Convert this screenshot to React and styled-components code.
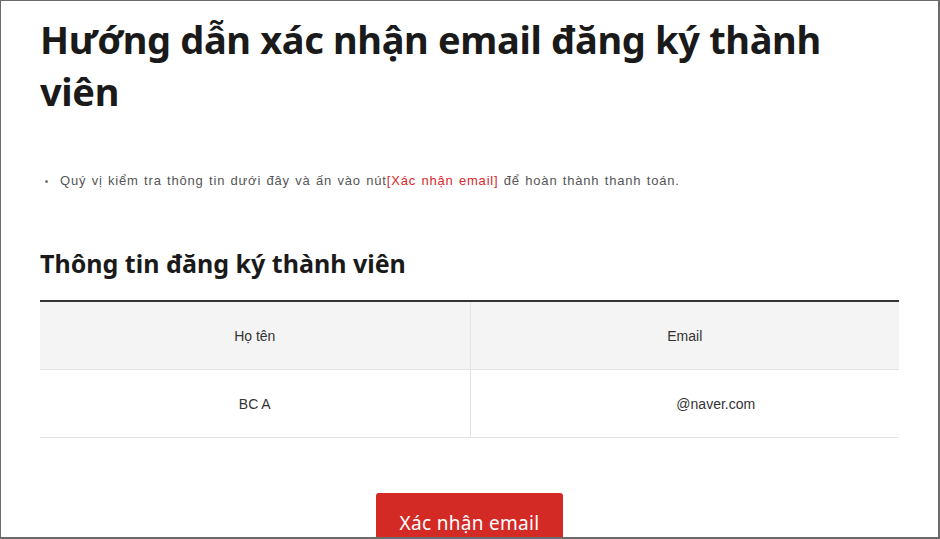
import React from "react";
import styled, { createGlobalStyle } from "styled-components";

const Global = createGlobalStyle`
  html, body { margin: 0; padding: 0; background: #fff; }
  * { box-sizing: border-box; }
`;

const Frame = styled.div`
  width: 940px;
  height: 539px;
  overflow: hidden;
  border-top: 1px solid #6b6b6b;
  border-left: 1px solid #6b6b6b;
  border-right: 2px solid #6b6b6b;
  border-bottom: 2px solid #6b6b6b;
  background: #fff;
`;

const Content = styled.div`
  padding: 12px 39px 0 39px;
  display: flex;
  flex-direction: column;
`;

const Title = styled.h1`
  margin: 0;
  font-family: "Noto Sans", "Open Sans", sans-serif;
  font-weight: 700;
  font-size: 38px;
  line-height: 52px;
  color: #1a1a1a;
  letter-spacing: -0.35px;
`;

const Notes = styled.ul`
  margin: 55px 0 0;
  padding: 0 0 0 20px;
  list-style: none;
`;

const Note = styled.li`
  position: relative;
  font-family: "Liberation Sans", Arial, sans-serif;
  font-size: 13px;
  line-height: 18px;
  letter-spacing: 0.8px;
  word-spacing: 1px;
  color: #555;
  &::before {
    content: "";
    position: absolute;
    left: -15px;
    top: 8px;
    width: 3px;
    height: 3px;
    border-radius: 50%;
    background: #777;
  }
`;

const Highlight = styled.span`
  color: #d8272a;
`;

const SubTitle = styled.h2`
  margin: 57px 0 0;
  font-family: "Noto Sans", "Open Sans", sans-serif;
  font-weight: 700;
  font-size: 25px;
  line-height: 32px;
  color: #1a1a1a;
`;

const Table = styled.div`
  margin-top: 21px;
  border-top: 2px solid #333;
  display: grid;
  grid-template-columns: 1fr 1fr;
`;

const Cell = styled.div`
  height: 68px;
  display: flex;
  align-items: center;
  justify-content: center;
  padding-left: ${(p) => p.$shift || 0}px;
  background: ${(p) => (p.$head ? "#f4f4f4" : "#fff")};
  border-bottom: 1px solid #e3e3e3;
  border-left: ${(p) => (p.$divider ? "1px solid #e3e3e3" : "none")};
  font-family: "Liberation Sans", Arial, sans-serif;
  font-size: 14px;
  color: #333;
`;

const Actions = styled.div`
  display: flex;
  justify-content: center;
  margin-top: 55px;
`;

const Button = styled.button`
  width: 187px;
  height: 52px;
  border: none;
  border-radius: 3px;
  background: #d42a26;
  color: #fff;
  font-family: "Noto Sans", "Open Sans", sans-serif;
  font-size: 19px;
  letter-spacing: 0.3px;
  display: flex;
  justify-content: center;
  align-items: flex-start;
  padding: 17px 0 0;
  cursor: pointer;
`;

export default function App() {
  return (
    <>
      <Global />
      <Frame>
        <Content>
          <Title>Hướng dẫn xác nhận email đăng ký thành viên</Title>
          <Notes>
            <Note>
              Quý vị kiểm tra thông tin dưới đây và ấn vào nút
              <Highlight>[Xác nhận email]</Highlight> để hoàn thành thanh toán.
            </Note>
          </Notes>
          <SubTitle>Thông tin đăng ký thành viên</SubTitle>
          <Table>
            <Cell $head>Họ tên</Cell>
            <Cell $head $divider>Email</Cell>
            <Cell>BC A</Cell>
            <Cell $divider $shift={62}>@naver.com</Cell>
          </Table>
          <Actions>
            <Button>Xác nhận email</Button>
          </Actions>
        </Content>
      </Frame>
    </>
  );
}
